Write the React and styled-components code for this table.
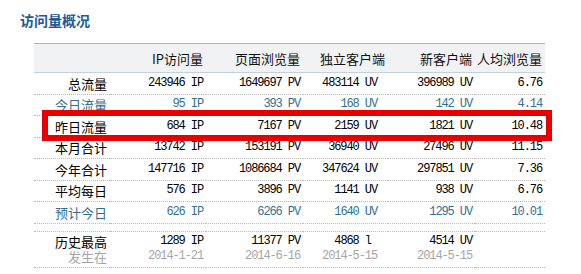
import React from "react";
import styled, { createGlobalStyle } from "styled-components";

const GlobalStyle = createGlobalStyle`
  body {
    margin: 0;
    background: #fff;
    font-family: "Noto Sans CJK SC", "Liberation Sans", sans-serif;
  }
`;

// column widths in px: label, IP, PV, UV, new UV, avg
const cols = [76, 96, 97, 85, 87, 70];

const rows = [
  { label: "总流量", ip: "243946", pv: "1649697", uv: "483114", nuv: "396989", avg: "6.76" },
  { label: "今日流量", ip: "95", pv: "393", uv: "168", nuv: "142", avg: "4.14", tone: "blue" },
  { label: "昨日流量", ip: "684", pv: "7167", uv: "2159", nuv: "1821", avg: "10.48" },
  { label: "本月合计", ip: "13742", pv: "153191", uv: "36940", nuv: "27496", avg: "11.15" },
  { label: "今年合计", ip: "147716", pv: "1086684", uv: "347624", nuv: "297851", avg: "7.36" },
  { label: "平均每日", ip: "576", pv: "3896", uv: "1141", nuv: "938", avg: "6.76" },
  { label: "预计今日", ip: "626", pv: "6266", uv: "1640", nuv: "1295", avg: "10.01", tone: "blue" },
];

const Page = styled.div`
  padding: 11px 0 0 20px;
`;

const Title = styled.h2`
  margin: 0 0 14px;
  font-size: 14px;
  line-height: 18px;
  font-weight: bold;
  color: #1d5a98;
`;

const TableWrap = styled.div`
  position: relative;
  margin-left: 14px;
  width: 511px;
`;

const Table = styled.table`
  width: 511px;
  border-collapse: collapse;
  table-layout: fixed;
`;

const HeadRow = styled.tr`
  height: 29px;
  background: #f1f2f4;
  border-top: 1px solid #9fb5c9;
  border-bottom: 1px solid #c3d1de;
`;

const Th = styled.th`
  padding: 0 3px 0 0;
  text-align: right;
  font-size: 13px;
  font-weight: normal;
  color: #111;
  white-space: nowrap;
`;

const Row = styled.tr`
  height: ${(p) => (p.$h ? p.$h : 21.5)}px;
  border-bottom: 1px dotted #bbb;
  color: ${(p) => (p.$tone === "blue" ? "#336f92" : "#000")};
`;

const Label = styled.td`
  padding: 0 3px 0 0;
  text-align: right;
  font-size: 13px;
  line-height: 15px;
  white-space: nowrap;
`;

const Num = styled.td`
  padding: 0 ${(p) => (p.$inset ? 11 : 3)}px 0 0;
  text-align: right;
  font-family: "Liberation Mono", "DejaVu Sans Mono", monospace;
  font-size: 12px;
  letter-spacing: -1.1px;
  line-height: 15px;
  white-space: nowrap;
`;

const Sub = styled.div`
  color: #a5a5a5;
`;

const Highlight = styled.div`
  position: absolute;
  left: 8px;
  top: 67px;
  width: 510px;
  height: 31px;
  box-sizing: border-box;
  border: 6px solid #e80000;
  pointer-events: none;
`;

export default function App() {
  return (
    <Page>
      <GlobalStyle />
      <Title>访问量概况</Title>
      <TableWrap>
        <Table>
          <colgroup>
            {cols.map((w, i) => (
              <col key={i} style={{ width: w }} />
            ))}
          </colgroup>
          <tbody>
            <HeadRow>
              <Th></Th>
              <Th>IP访问量</Th>
              <Th>页面浏览量</Th>
              <Th>独立客户端</Th>
              <Th>新客户端</Th>
              <Th>人均浏览量</Th>
            </HeadRow>
            {rows.map((r) => (
              <Row key={r.label} $tone={r.tone}>
                <Label>{r.label}</Label>
                <Num>{r.ip} IP</Num>
                <Num>{r.pv} PV</Num>
                <Num $inset>{r.uv} UV</Num>
                <Num>{r.nuv} UV</Num>
                <Num>{r.avg}</Num>
              </Row>
            ))}
            <Row $h={8}>
              <td colSpan={6}></td>
            </Row>
            <Row $h={36}>
              <Label>
                历史最高
                <Sub>发生在</Sub>
              </Label>
              <Num>
                1289 IP
                <Sub>2014-1-21</Sub>
              </Num>
              <Num>
                11377 PV
                <Sub>2014-6-16</Sub>
              </Num>
              <Num $inset>
                4868 l&nbsp;
                <Sub>2014-5-15</Sub>
              </Num>
              <Num>
                4514 UV
                <Sub>2014-5-15</Sub>
              </Num>
              <Num></Num>
            </Row>
          </tbody>
        </Table>
        <Highlight />
      </TableWrap>
    </Page>
  );
}
